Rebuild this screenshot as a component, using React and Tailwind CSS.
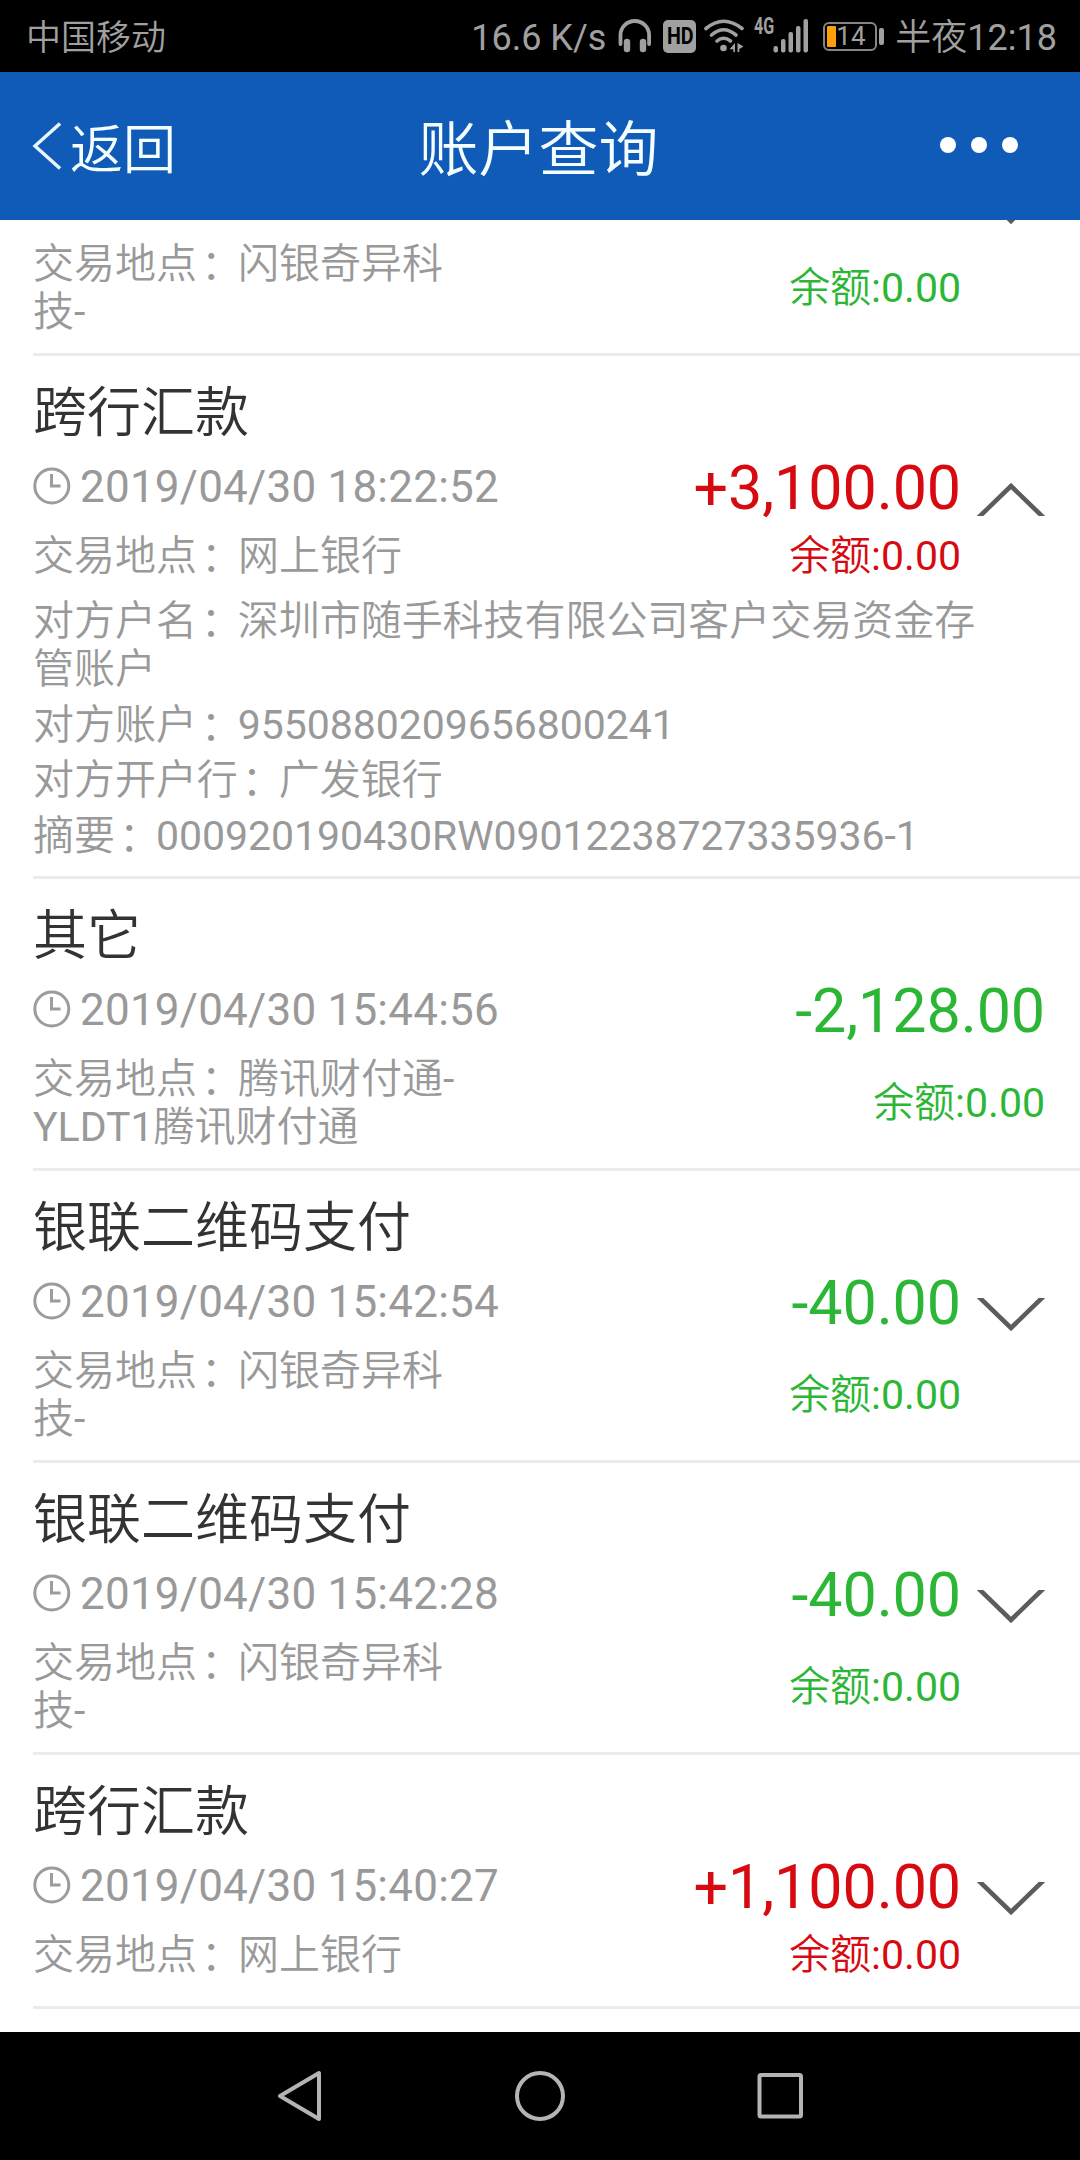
import React from "react";

const GREEN = "text-[#2cb635]";
const RED = "text-[#d60a10]";

const transactions = [
  {
    place: "闪银奇异科技-",
    tone: GREEN,
    chevron: "down",
    height: "h-[292px]",
  },
  {
    title: "跨行汇款",
    time: "2019/04/30 18:22:52",
    place: "网上银行",
    amount: "+3,100.00",
    tone: RED,
    chevron: "up",
    height: "h-[523px]",
    details: [
      ["对方户名", "深圳市随手科技有限公司客户交易资金存管账户"],
      ["对方账户", "9550880209656800241"],
      ["对方开户行", "广发银行"],
      ["摘要", "000920190430RW09012238727335936-1"],
    ],
  },
  {
    title: "其它",
    time: "2019/04/30 15:44:56",
    place: "腾讯财付通-YLDT1腾讯财付通",
    amount: "-2,128.00",
    tone: GREEN,
    height: "h-[292px]",
  },
  {
    title: "银联二维码支付",
    time: "2019/04/30 15:42:54",
    place: "闪银奇异科技-",
    amount: "-40.00",
    tone: GREEN,
    chevron: "down",
    height: "h-[292px]",
  },
  {
    title: "银联二维码支付",
    time: "2019/04/30 15:42:28",
    place: "闪银奇异科技-",
    amount: "-40.00",
    tone: GREEN,
    chevron: "down",
    height: "h-[292px]",
  },
  {
    title: "跨行汇款",
    time: "2019/04/30 15:40:27",
    place: "网上银行",
    amount: "+1,100.00",
    tone: RED,
    chevron: "down",
    height: "h-[254px]",
  },
];

function ClockIcon() {
  return (
    <svg className="h-[38px] w-[38px] shrink-0" viewBox="0 0 38 38" fill="none" stroke="#9c9c9c">
      <circle cx="18.8" cy="19" r="17" strokeWidth="3" />
      <path d="M18.5 7V19H27.5" strokeWidth="3" />
    </svg>
  );
}

function Chevron({ direction }) {
  return (
    <svg className="h-[33px] w-[68px]" viewBox="0 0 68 33" fill="none" stroke="#5c5c5c" strokeWidth="4.6">
      <path d={direction === "up" ? "M1 35L34 3L67 35" : "M1 -2L34 30L67 -2"} />
    </svg>
  );
}

function Headphones() {
  return (
    <svg className="ml-[12px] h-[34px] w-[34px]" viewBox="0 0 34 34" fill="none" stroke="#a0a0a0" strokeLinecap="round">
      <path d="M2.5 25V16A14.3 14 0 0 1 31.1 16V25" strokeWidth="3.8" />
      <path d="M9 23V30M25 23V30" strokeWidth="6.4" />
    </svg>
  );
}

function Wifi() {
  return (
    <svg className="ml-[8px] h-[34px] w-[41px]" viewBox="0 0 41 34" fill="none" stroke="#a0a0a0" strokeWidth="3.6" strokeLinecap="round">
      <path d="M2 9.5Q19.5 -5 38 9.5" />
      <path d="M7.5 16Q19.5 5.5 32 16" />
      <path d="M13 22Q19.5 16.5 26.5 22" />
      <circle cx="19.5" cy="29" r="3.3" fill="#a0a0a0" stroke="none" />
      <path d="M31 24V33H29.3V30.3H25.5ZM33.5 24L39.5 27.5L35.3 30V33H33.5Z" fill="#a0a0a0" stroke="none" />
    </svg>
  );
}

function Signal() {
  return (
    <div className="flex h-[34px] items-start">
      <span className="ml-[9px] w-[19px] origin-left scale-x-[0.7] text-[23px] leading-[16px] font-bold">4G</span>
      <svg className="h-[34px] w-[36px]" viewBox="0 0 36 34" fill="#a0a0a0">
        <rect x="0.5" y="27" width="4.5" height="6.5" rx="2" />
        <rect x="8" y="20" width="4.5" height="13.5" rx="2" />
        <rect x="15.5" y="13" width="4.5" height="20.5" rx="2" />
        <rect x="23" y="7" width="4.5" height="26.5" rx="2" />
        <rect x="30.5" y="0" width="4.5" height="33.5" rx="2" />
      </svg>
    </div>
  );
}

function Battery() {
  return (
    <div className="ml-[14px] flex items-center gap-[2px]">
      <div className="flex h-[29px] w-[54px] items-center rounded-[6px] border-2 border-[#858585] pl-[2px]">
        <div className="h-[21px] w-[9px] rounded-[1px] bg-[#ff9d0a]" />
        <span className="text-[26px] leading-[26px]">14</span>
      </div>
      <div className="h-[17px] w-[5px] rounded-[2px] bg-[#a0a0a0]" />
    </div>
  );
}

function StatusBar() {
  return (
    <div className="flex h-[72px] items-center justify-between bg-black pr-[23px] pl-[26px] text-[36px] leading-[42px] text-[#a0a0a0]">
      <span className="mt-[6px] text-[35px]">中国移动</span>
      <div className="flex items-center">
        <span className="mt-[4px]">16.6 K/s</span>
        <Headphones />
        <div className="ml-[11px] flex h-[33px] w-[33px] items-center justify-center rounded-[5px] bg-[#a0a0a0] text-black">
          <span className="scale-x-[0.82] text-[24px] font-bold">HD</span>
        </div>
        <Wifi />
        <Signal />
        <Battery />
        <span className="mt-[4px] ml-[11px]">半夜12:18</span>
      </div>
    </div>
  );
}

function Header() {
  return (
    <header className="grid h-[148px] grid-cols-3 items-center bg-[#105bb8] text-[#f4feff]">
      <div className="flex items-center pl-[32px]">
        <svg className="h-[48px] w-[29px]" viewBox="0 0 29 48" fill="none" stroke="#e8f6ff" strokeWidth="3.4">
          <path d="M28 1.5L3 24L28 46.5" />
        </svg>
        <span className="mt-[10px] ml-[9px] text-[53px] leading-[60px]">返回</span>
      </div>
      <h1 className="mt-[9px] pr-[3px] text-center text-[60px] leading-[70px]">账户查询</h1>
      <div className="-mt-[2px] flex justify-end gap-[15px] pr-[62px]">
        <i className="h-[16px] w-[16px] rounded-full bg-white" />
        <i className="h-[16px] w-[16px] rounded-full bg-white" />
        <i className="h-[16px] w-[16px] rounded-full bg-white" />
      </div>
    </header>
  );
}

function Label({ children }) {
  return (
    <>
      {children}
      <span className="inline-block translate-x-[4px] translate-y-px">：</span>
    </>
  );
}

function Transaction({ item }) {
  return (
    <li className={`${item.height} flex shrink-0 flex-col border-t-3 border-[#ebebeb] pt-[26px]`}>
      <h2 className="h-[64px] text-[54px] leading-[64px] text-[#333]">{item.title}</h2>
      <div className="flex">
        <div className="min-w-0 grow">
          <div className="flex h-[82px] items-center">
            <div className="mb-[3px] flex grow items-center gap-[9px]">
              <ClockIcon />
              <span className="mt-[3px] text-[44px] leading-[52px] tracking-[0.22px]">{item.time}</span>
            </div>
            <span className={`${item.tone} mt-px text-[61px] leading-[72px] tracking-[-0.1px]`}>{item.amount}</span>
          </div>
          <div className="mt-[4px] flex items-center justify-between">
            <p className="w-[430px] text-[41px] leading-[48px] break-words">
              <Label>交易地点</Label>
              {item.place}
            </p>
            <span className={`${item.tone} text-[41px] leading-[48px]`}>余额:0.00</span>
          </div>
        </div>
        {item.chevron ? (
          <div className="w-[119px] shrink-0 pt-[37px] pl-[16px]">
            <Chevron direction={item.chevron} />
          </div>
        ) : (
          <div className="w-[35px] shrink-0" />
        )}
      </div>
      {item.details && (
        <dl className="mt-[17px] flex w-[960px] flex-col gap-[7.5px] text-[41px] leading-[48px] tracking-[-0.04px]">
          {item.details.map(([label, value]) => (
            <div key={label}>
              <dt className="inline">
                <Label>{label}</Label>
              </dt>
              <dd className="inline">{value}</dd>
            </div>
          ))}
        </dl>
      )}
    </li>
  );
}

function NavBar() {
  return (
    <nav className="flex h-[128px] items-center justify-center gap-[190px] bg-black">
      <svg className="h-[52px] w-[50px]" viewBox="0 0 50 52" fill="none" stroke="#b4b4b4" strokeWidth="4" strokeLinejoin="round">
        <path d="M45 3V49L6 26Z" />
      </svg>
      <svg className="h-[52px] w-[52px]" viewBox="0 0 52 52" fill="none" stroke="#b4b4b4" strokeWidth="4">
        <circle cx="26" cy="26" r="23" />
      </svg>
      <svg className="h-[52px] w-[50px]" viewBox="0 0 50 52" fill="none" stroke="#b4b4b4" strokeWidth="4">
        <rect x="3.5" y="5" width="41.5" height="41.5" rx="1.5" />
      </svg>
    </nav>
  );
}

export default function App() {
  return (
    <div className="flex h-[2160px] w-[1080px] flex-col overflow-hidden bg-white font-['Roboto','Noto_Sans_CJK_SC_DemiLight','Noto_Sans_CJK_SC',sans-serif]">
      <StatusBar />
      <Header />
      <main className="min-h-0 grow overflow-hidden">
        <ul className="-mt-[159px] flex flex-col pl-[33px] text-[#999]">
          {transactions.map((item, index) => (
            <Transaction key={index} item={item} />
          ))}
          <li className="border-t-3 border-[#ebebeb]" />
        </ul>
      </main>
      <NavBar />
    </div>
  );
}
